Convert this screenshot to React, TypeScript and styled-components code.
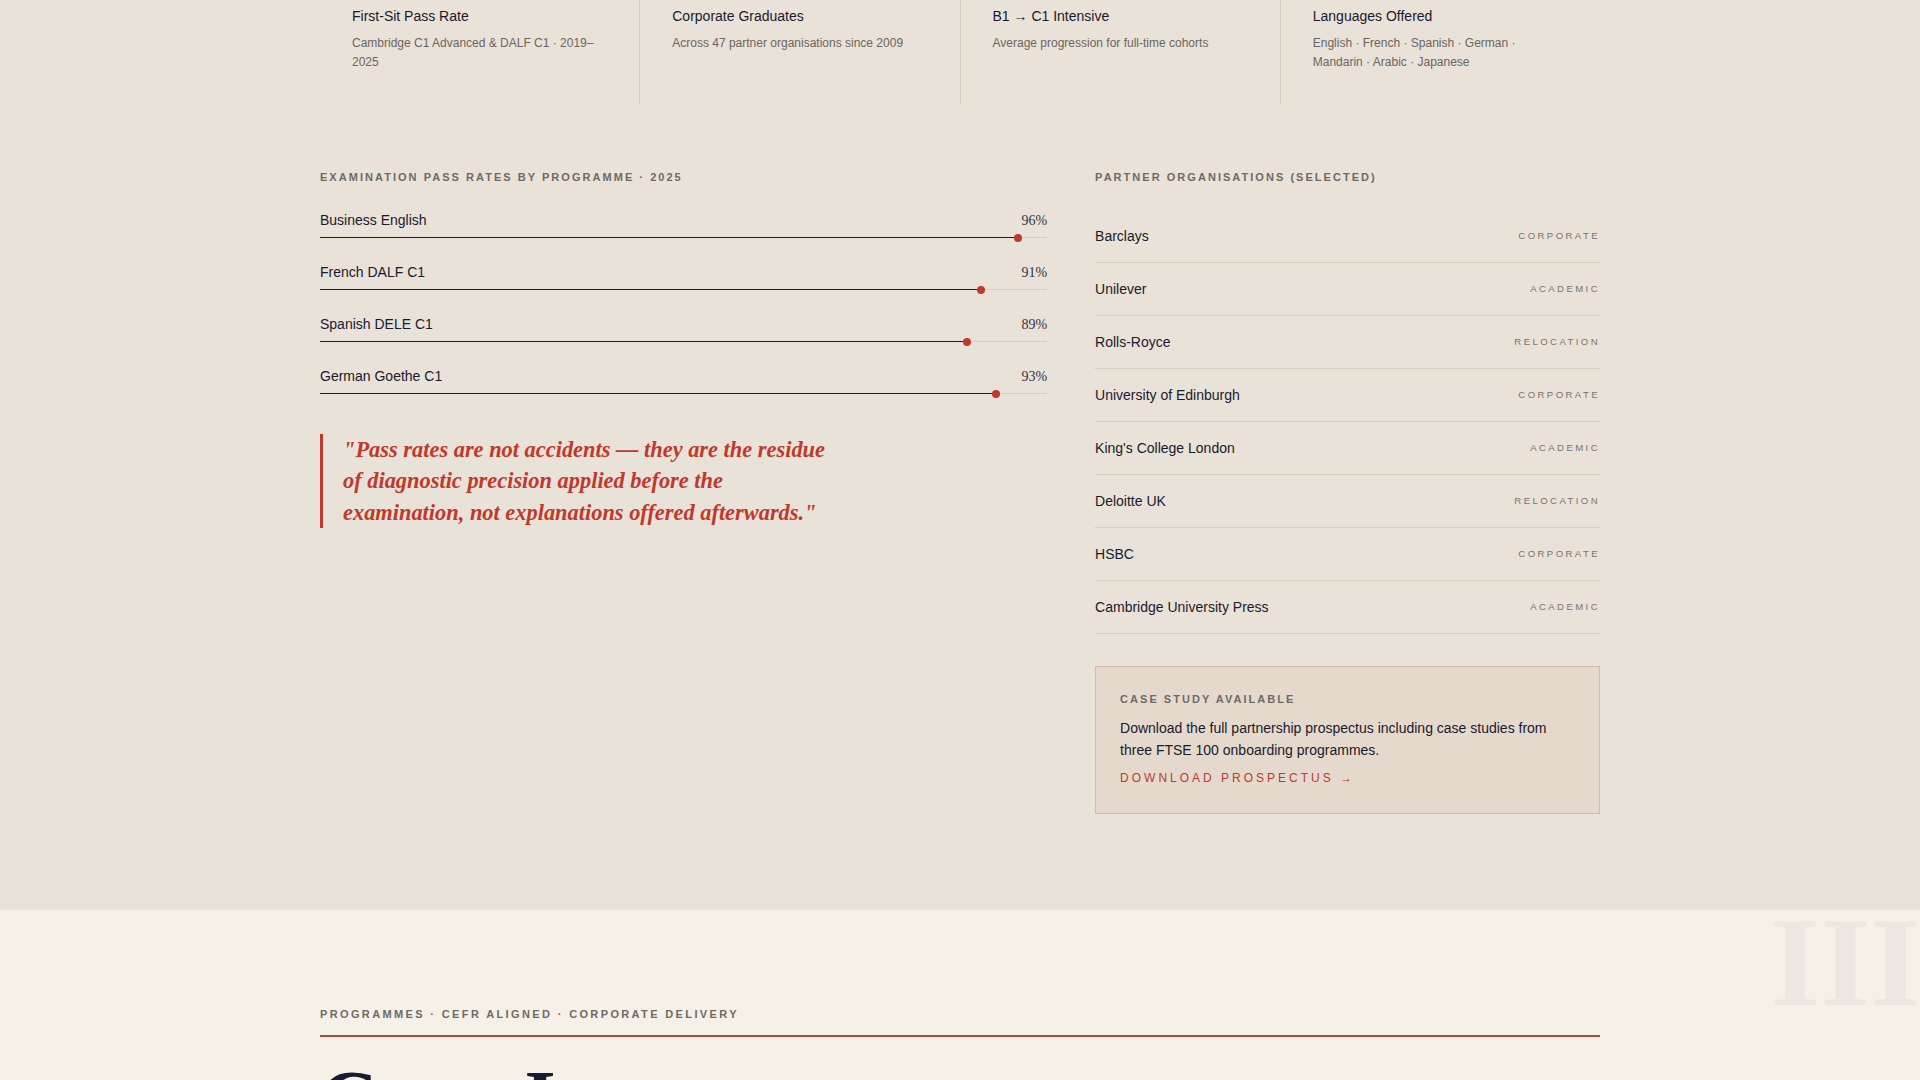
import React from 'react';
import styled, { createGlobalStyle } from 'styled-components';

const Global = createGlobalStyle`
  html, body { margin: 0; padding: 0; height: 1080px; overflow: hidden; }
  body { background: #e8e2d8; font-family: "Liberation Sans", Arial, sans-serif; color: #1a1a2e; }
`;

const serif = `"Liberation Serif", "Times New Roman", serif`;

const Band = styled.section`
  background: #e8e2d8;
  padding-bottom: 96px;
`;
const Container = styled.div`
  width: 1280px;
  margin: 0 auto;
`;
const StatRow = styled.div`
  display: grid;
  grid-template-columns: repeat(4, 1fr);
  column-gap: 1px;
  background: #d4cdc0;
  margin-bottom: 65px;
`;
const Stat = styled.div`
  height: 104px;
  padding: 6px 32px 0;
  box-sizing: border-box;
  background: #e8e2d8;
`;
const StatTitle = styled.div`
  font-size: 14px;
  line-height: 20px;
  color: #1a1a2e;
  margin-bottom: 8px;
`;
const StatDesc = styled.div`
  font-size: 12px;
  line-height: 19.2px;
  color: #6b6560;
`;
const Columns = styled.div`
  display: grid;
  grid-template-columns: 1.44fr 1fr;
  column-gap: 48px;
  align-items: start;
`;
const Label = styled.div`
  font-size: 11px;
  font-weight: 700;
  line-height: 16px;
  letter-spacing: 0.185em;
  text-transform: uppercase;
  color: #6e6a66;
`;
const WideLabel = styled(Label)`
  letter-spacing: 0.215em;
`;
const Bars = styled.div`
  margin-top: 25px;
  display: flex;
  flex-direction: column;
  gap: 24px;
`;
const BarHead = styled.div`
  display: flex;
  justify-content: space-between;
  align-items: baseline;
  height: 20px;
  line-height: 20px;
  margin-bottom: 7px;
`;
const BarName = styled.span`
  font-size: 14px;
`;
const BarValue = styled.span`
  font-family: ${serif};
  font-size: 14px;
  color: #33333f;
`;
const Track = styled.div`
  position: relative;
  height: 1px;
  background: #d4cdc0;
`;
const Fill = styled.div`
  position: relative;
  height: 100%;
  background: #1a1a2e;
`;
const Dot = styled.span`
  position: absolute;
  right: -3.6px;
  top: -3.5px;
  width: 8px;
  height: 8px;
  border-radius: 50%;
  background: #c0392b;
`;
const Quote = styled.blockquote`
  margin: 40px 0 0;
  padding-left: 20px;
  border-left: 3px solid #c0392b;
  max-width: 500px;
  font-family: ${serif};
  font-size: 22.4px;
  line-height: 1.4;
  font-style: italic;
  font-weight: 700;
  color: #c0392b;
`;
const Partners = styled.div`
  margin-top: 25px;
`;
const Partner = styled.div`
  display: flex;
  justify-content: space-between;
  align-items: center;
  height: 53px;
  box-sizing: border-box;
  border-bottom: 1px solid #d4cdc0;
`;
const PartnerName = styled.span`
  font-size: 14px;
`;
const Tag = styled.span`
  font-size: 9.6px;
  letter-spacing: 0.25em;
  margin-bottom: 1px;
  text-transform: uppercase;
  color: #7a746c;
`;
const CaseBox = styled.div`
  margin-top: 32px;
  padding: 24px;
  background: #e5d9cd;
  border: 1px solid #d9b9ac;
`;
const CaseBody = styled.p`
  margin: 10px 0 7px;
  font-size: 14px;
  line-height: 22.4px;
`;
const CaseLink = styled.a`
  display: block;
  margin-bottom: 1px;
  font-size: 12px;
  line-height: 19.2px;
  letter-spacing: 0.25em;
  text-transform: uppercase;
  color: #c0392b;
`;
const LightBand = styled.section`
  position: relative;
  background: #f5f0e8;
  padding-top: 96px;
  height: 170px;
  overflow: hidden;
`;
const Watermark = styled.div`
  position: absolute;
  top: -12px;
  right: -1px;
  font-family: ${serif};
  font-size: 128px;
  line-height: 1;
  font-weight: 700;
  letter-spacing: 0.5px;
  color: #1a1a2e;
  opacity: 0.035;
`;
const LightHead = styled.div`
  border-bottom: 2px solid #a94a32;
  padding-bottom: 13px;
`;
const Title = styled.h2`
  margin: 18px 0 0;
  font-family: ${serif};
  font-size: 80px;
  line-height: 1.1;
  letter-spacing: -0.02em;
  font-weight: 700;
  color: #1a1a2e;
`;

const stats = [
  ['First-Sit Pass Rate', 'Cambridge C1 Advanced & DALF C1 · 2019–2025'],
  ['Corporate Graduates', 'Across 47 partner organisations since 2009'],
  ['B1 → C1 Intensive', 'Average progression for full-time cohorts'],
  ['Languages Offered', 'English · French · Spanish · German · Mandarin · Arabic · Japanese'],
];
const bars: [string, number][] = [
  ['Business English', 96],
  ['French DALF C1', 91],
  ['Spanish DELE C1', 89],
  ['German Goethe C1', 93],
];
const partners = [
  ['Barclays', 'Corporate'],
  ['Unilever', 'Academic'],
  ['Rolls-Royce', 'Relocation'],
  ['University of Edinburgh', 'Corporate'],
  ["King's College London", 'Academic'],
  ['Deloitte UK', 'Relocation'],
  ['HSBC', 'Corporate'],
  ['Cambridge University Press', 'Academic'],
];

export default function App() {
  return (
    <>
      <Global />
      <Band>
        <Container>
          <StatRow>
            {stats.map(([t, d]) => (
              <Stat key={t}>
                <StatTitle>{t}</StatTitle>
                <StatDesc>{d}</StatDesc>
              </Stat>
            ))}
          </StatRow>
          <Columns>
            <div>
              <Label>Examination Pass Rates by Programme · 2025</Label>
              <Bars>
                {bars.map(([n, v]) => (
                  <div key={n}>
                    <BarHead>
                      <BarName>{n}</BarName>
                      <BarValue>{v}%</BarValue>
                    </BarHead>
                    <Track>
                      <Fill style={{ width: `${v}%` }}>
                        <Dot />
                      </Fill>
                    </Track>
                  </div>
                ))}
              </Bars>
              <Quote>"Pass rates are not accidents — they are the residue of diagnostic precision applied before the examination, not explanations offered afterwards."</Quote>
            </div>
            <div>
              <Label>Partner Organisations (Selected)</Label>
              <Partners>
                {partners.map(([n, t]) => (
                  <Partner key={n}>
                    <PartnerName>{n}</PartnerName>
                    <Tag>{t}</Tag>
                  </Partner>
                ))}
              </Partners>
              <CaseBox>
                <Label>Case Study Available</Label>
                <CaseBody>Download the full partnership prospectus including case studies from three FTSE 100 onboarding programmes.</CaseBody>
                <CaseLink>Download Prospectus →</CaseLink>
              </CaseBox>
            </div>
          </Columns>
        </Container>
      </Band>
      <LightBand>
        <Watermark>III</Watermark>
        <Container>
          <LightHead>
            <WideLabel>Programmes · CEFR Aligned · Corporate Delivery</WideLabel>
          </LightHead>
          <Title>Cross I</Title>
        </Container>
      </LightBand>
    </>
  );
}
